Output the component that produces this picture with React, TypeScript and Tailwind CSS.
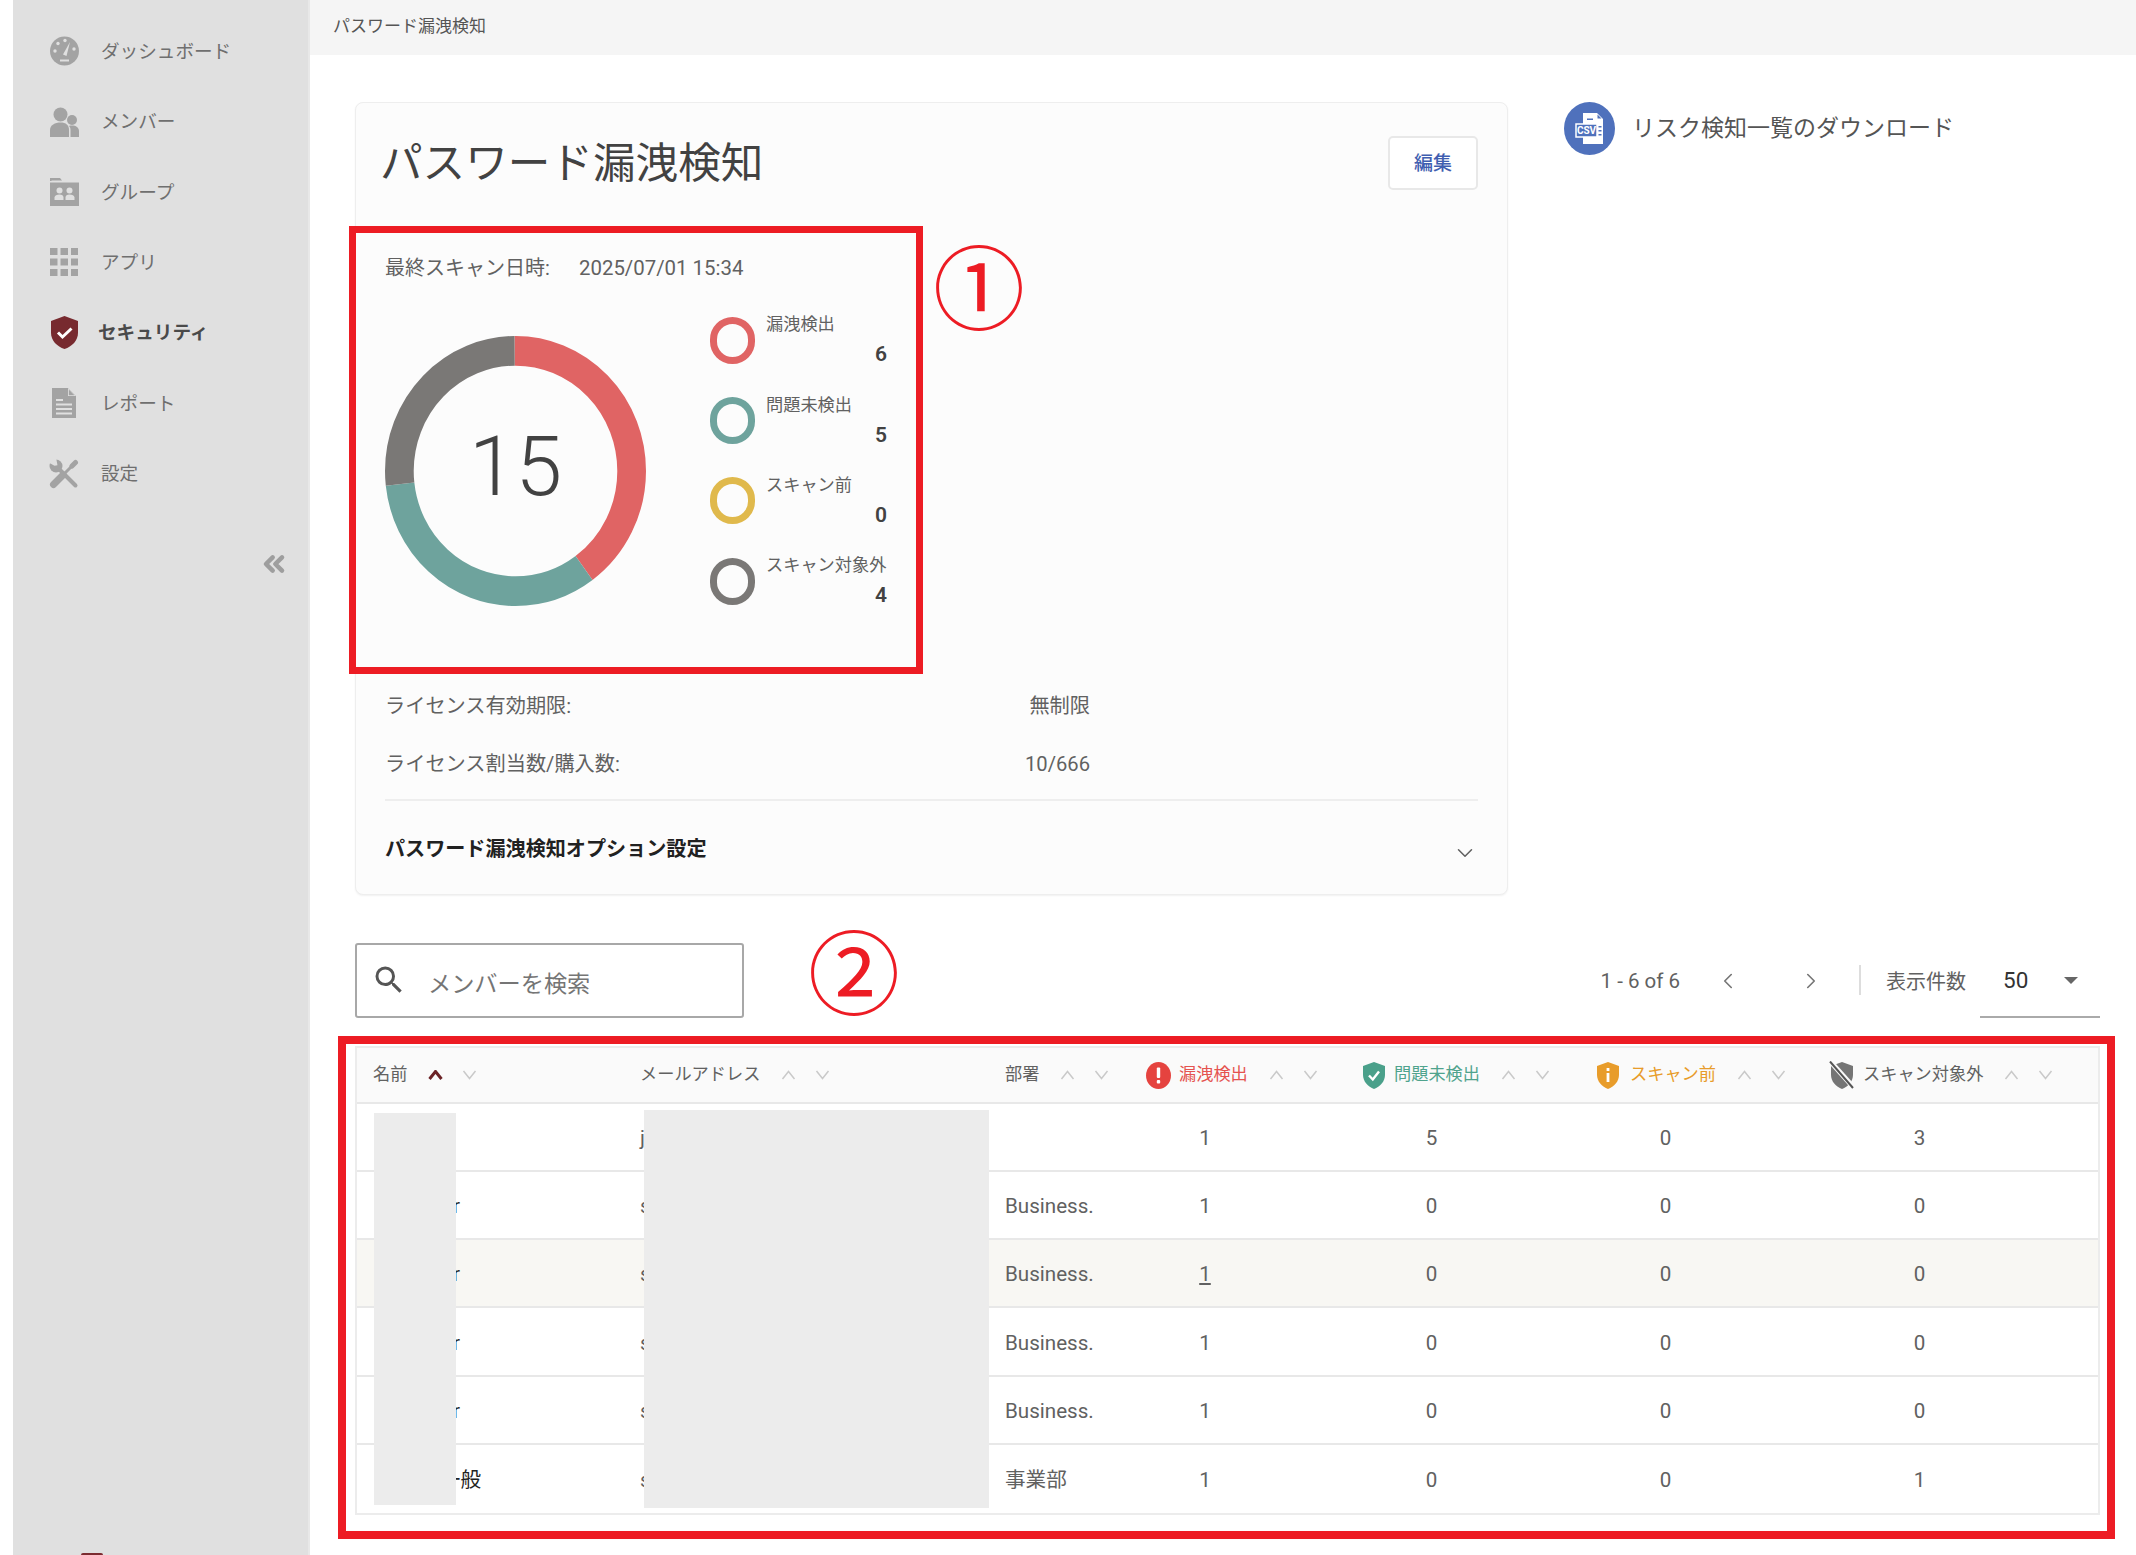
import React from "react";
import { ChevronsLeft, ChevronLeft, ChevronRight, ChevronDown } from "lucide-react";

const G = "#a3a3a3";
const BG = "#e0e0e0";

const GaugeIcon = () => (
  <svg width="29" height="30" viewBox="0 0 29 30">
    <circle cx="14.5" cy="15" r="14.5" fill={G} />
    <circle cx="5" cy="15" r="1.7" fill={BG} />
    <circle cx="8" cy="7.5" r="1.7" fill={BG} />
    <circle cx="15" cy="4.5" r="1.7" fill={BG} />
    <circle cx="24" cy="13" r="1.7" fill={BG} />
    <path d="M13 18.5L20 6L16.5 20Z" fill={BG} />
    <rect x="10" y="23.5" width="9" height="2" fill={BG} />
  </svg>
);
const MembersIcon = () => (
  <svg width="29" height="30" viewBox="0 0 29 30">
    <circle cx="10.5" cy="7.5" r="7" fill={G} />
    <circle cx="22" cy="13" r="5" fill={G} />
    <path d="M0 30V23C0 18 5 15.5 10.5 15.5C16 15.5 19 18 19 23V30Z" fill={G} />
    <path d="M20.5 30V23C20.5 21 19.8 19.5 18.8 19C20 18.6 21 18.5 22 18.5C26 18.5 29 20.5 29 24V30Z" fill={G} />
  </svg>
);
const GroupIcon = () => (
  <svg width="29" height="28" viewBox="0 0 29 28">
    <path d="M0 3V0H10L12 2.5H1.5V3Z" fill={G} />
    <rect x="0" y="4.5" width="29" height="23.5" fill={G} />
    <circle cx="9.5" cy="12.5" r="3" fill={BG} />
    <circle cx="19.5" cy="12.5" r="3" fill={BG} />
    <path d="M4.5 22V19.5C4.5 17.5 7 16.5 9.5 16.5S13.5 17.5 13.5 19.5V22Z" fill={BG} />
    <path d="M15.5 22V19.5C15.5 17.5 17 16.5 19.5 16.5S24.5 17.5 24.5 19.5V22Z" fill={BG} />
  </svg>
);
const AppsIcon = () => (
  <svg width="28" height="28" viewBox="0 0 28 28" fill={G}>
    {[0, 10.5, 21].map((x) =>
      [0, 10.5, 21].map((y) => <rect key={`${x}-${y}`} x={x} y={y} width="7.5" height="7" />)
    )}
  </svg>
);
const ShieldIcon = () => (
  <svg width="27" height="33" viewBox="0 0 27 33">
    <path d="M13.5 0L27 5V17C27 24.5 21 30.5 13.5 33C6 30.5 0 24.5 0 17V5Z" fill="#772a2f" />
    <path d="M7 16.5L11.5 21L20.5 12.5" fill="none" stroke="#fff" strokeWidth="3" />
  </svg>
);
const ReportIcon = () => (
  <svg width="24" height="30" viewBox="0 0 24 30">
    <path d="M0 0H16L24 8V30H0Z" fill={G} />
    <path d="M16 0V8H24Z" fill={BG} />
    <path d="M16.8 1.5L22.5 7.2H16.8Z" fill={G} />
    <rect x="4" y="11" width="7" height="2" fill={BG} />
    <rect x="4" y="15.5" width="16" height="2" fill={BG} />
    <rect x="4" y="20" width="16" height="2" fill={BG} />
    <rect x="4" y="24.5" width="16" height="2" fill={BG} />
  </svg>
);
const ToolsIcon = () => (
  <svg width="30" height="30" viewBox="0 0 30 30" fill="none">
    <path d="M7 7L26.5 26.5" stroke={G} strokeWidth="4" strokeLinecap="round" />
    <circle cx="7" cy="7" r="6.5" fill={G} />
    <path d="M0 0L8 0L8 7L5 7L0 3Z" fill={BG} transform="rotate(-10 4 4)" />
    <path d="M4.5 25.5L14 16" stroke={G} strokeWidth="7" strokeLinecap="round" />
    <path d="M14 16L23 7" stroke={G} strokeWidth="3" />
    <path d="M23 7L26.5 3.5" stroke={G} strokeWidth="5" strokeLinecap="round" />
  </svg>
);

const CsvIcon = () => (
  <svg width="51" height="53" viewBox="0 0 51 53">
    <ellipse cx="25.5" cy="26.5" rx="25.5" ry="26.5" fill="#4f71bc" />
    <path d="M19 11H33L39 17V42H19Z" fill="#fff" />
    <path d="M33.5 12.5L37.5 16.5H33.5Z" fill="#4f71bc" />
    <rect x="23" y="16.5" width="6" height="1.5" fill="#4f71bc" />
    <rect x="34.5" y="24" width="3" height="1.5" fill="#4f71bc" />
    <rect x="34.5" y="28" width="3" height="1.5" fill="#4f71bc" />
    <rect x="34.5" y="32" width="3" height="1.5" fill="#4f71bc" />
    <rect x="12" y="22" width="21" height="13" fill="#4f71bc" stroke="#fff" strokeWidth="1.5" />
    <text x="22.5" y="32" textAnchor="middle" fontSize="10" fontWeight="700" fill="#fff" fontFamily="Roboto, sans-serif">CSV</text>
  </svg>
);

const Alert = () => (
  <svg width="25" height="27" viewBox="0 0 25 27" className="shrink-0">
    <ellipse cx="12.5" cy="13.5" rx="12.5" ry="13.5" fill="#e5433f" />
    <rect x="10.8" y="5.5" width="3.4" height="10.5" rx="1" fill="#fff" />
    <rect x="10.8" y="18" width="3.4" height="3.4" rx="1" fill="#fff" />
  </svg>
);
const ShieldSmall = ({ c, children }: { c: string; children?: React.ReactNode }) => (
  <svg width="22" height="27" viewBox="0 0 22 27" className="shrink-0">
    <path d="M11 0L22 4V13C22 19.5 17 24.5 11 27C5 24.5 0 19.5 0 13V4Z" fill={c} />
    {children}
  </svg>
);
const SlashShield = () => (
  <svg width="26" height="28" viewBox="0 0 26 28" className="shrink-0">
    <path d="M13 1L24 5V14C24 20.5 19 25.5 13 28C7 25.5 2 20.5 2 14V5Z" fill="#757575" />
    <path d="M1 0L25 27" stroke="#fafafa" strokeWidth="5" />
    <path d="M1 0.5L24 27" stroke="#555" strokeWidth="2" />
  </svg>
);

const Chev = ({ up, active }: { up?: boolean; active?: boolean }) => (
  <svg width="15" height="10" viewBox="0 0 15 10" fill="none" className="shrink-0">
    <path
      d={up ? "M1.5 9L7.5 1.5L13.5 9" : "M1.5 1L7.5 8.5L13.5 1"}
      stroke={active ? "#6b2226" : "#c9c9c9"}
      strokeWidth={active ? 3 : 1.5}
    />
  </svg>
);
const Sort = ({ active }: { active?: boolean }) => (
  <div className="ml-[21px] flex shrink-0 items-center gap-[19px]">
    <Chev up active={active} />
    <Chev />
  </div>
);

const nav = [
  { label: "ダッシュボード", icon: <GaugeIcon /> },
  { label: "メンバー", icon: <MembersIcon /> },
  { label: "グループ", icon: <GroupIcon /> },
  { label: "アプリ", icon: <AppsIcon /> },
  { label: "セキュリティ", icon: <ShieldIcon />, active: true },
  { label: "レポート", icon: <ReportIcon /> },
  { label: "設定", icon: <ToolsIcon /> },
];

const legend = [
  { label: "漏洩検出", value: 6, ring: "border-[#e06464]" },
  { label: "問題未検出", value: 5, ring: "border-[#6ea39d]" },
  { label: "スキャン前", value: 0, ring: "border-[#e0b94c]" },
  { label: "スキャン対象外", value: 4, ring: "border-[#7a7876]" },
];

const cols = "grid grid-cols-[265px_365px_150px_136px_317px_151px_1fr]";

const rows = [
  { name: "", nameW: "w-[87px]", mail: "j", dept: "", n: [1, 5, 0, 3] },
  { name: "r", nameW: "w-[87px]", mail: "s", dept: "Business.", n: [1, 0, 0, 0] },
  { name: "r", nameW: "w-[87px]", mail: "s", dept: "Business.", n: [1, 0, 0, 0], hover: true },
  { name: "r", nameW: "w-[87px]", mail: "s", dept: "Business.", n: [1, 0, 0, 0] },
  { name: "r", nameW: "w-[87px]", mail: "s", dept: "Business.", n: [1, 0, 0, 0] },
  { name: "一般", nameW: "w-[108px]", mail: "s", dept: "事業部", n: [1, 0, 0, 1] },
];

export default function App() {
  return (
    <div className="relative flex h-[1555px] w-[2136px] overflow-hidden bg-white pl-[13px] font-[family-name:Roboto,'Noto_Sans_CJK_JP',sans-serif] text-[#616161]">
      {/* Sidebar */}
      <aside className="flex h-full w-[297px] shrink-0 flex-col border-r-2 border-[#e8e8e8] bg-[#e0e0e0] pt-[16px]">
        {nav.map((n) => (
          <div key={n.label} className="flex h-[70.4px] items-center pl-[36px]">
            <div className="flex w-[30px] shrink-0 items-center justify-center">{n.icon}</div>
            <span
              className={
                n.active
                  ? "ml-[19px] mt-[2px] text-[18.6px] font-bold text-[#4a4a4a]"
                  : "ml-[22px] mt-[3px] text-[18.6px] text-[#6f6f6f]"
              }
            >
              {n.label}
            </span>
          </div>
        ))}
        <div className="mt-[39px] flex justify-end pr-[18px]">
          <ChevronsLeft size={32} strokeWidth={3.4} color="#9e9e9e" />
        </div>
        <div className="mt-auto ml-[68px] h-[2px] w-[22px] rounded-t-full bg-[#7b2b30]" />
      </aside>

      {/* Main */}
      <main className="min-w-0 flex-1">
        <div className="flex h-[55px] items-center bg-[#f5f5f5] pb-[2px] pl-[23px] text-[17px] text-[#555]">
          パスワード漏洩検知
        </div>

        <div className="pl-[45px]">
          <div className="mt-[47px] flex items-start">
            {/* Card */}
            <section className="w-[1153px] shrink-0 rounded-[8px] border border-[#eeeeee] bg-[#fcfcfc] px-[29px] pt-[34px] pb-[31px] shadow-[0_1px_2px_rgba(0,0,0,0.06)]">
              <div className="flex h-[52px] items-center justify-between">
                <h1 className="-ml-[5px] text-[42.6px] font-normal leading-none text-[#424242]">パスワード漏洩検知</h1>
                <button className="flex h-[54px] w-[90px] items-center justify-center rounded-[5px] border-2 border-[#e8e8e8] bg-white pt-[2px] text-[19px] font-medium text-[#3f5eb0]">
                  編集
                </button>
              </div>

              <div className="mt-[65px] flex h-[28px] items-center text-[20px]">
                <span className="w-[194px]">最終スキャン日時:</span>
                <span className="text-[20.4px]">2025/07/01 15:34</span>
              </div>

              <div className="mt-[18px] flex items-start">
                <div className="relative mt-[36px] h-[270px] w-[261px] shrink-0">
                  <svg width="261" height="270" viewBox="0 0 100 100" preserveAspectRatio="none" className="block">
                    <g transform="rotate(-90 50 50)" fill="none" strokeWidth="11">
                      <circle cx="50" cy="50" r="44.5" pathLength={15} stroke="#e06464" strokeDasharray="6 9" />
                      <circle cx="50" cy="50" r="44.5" pathLength={15} stroke="#6ea39d" strokeDasharray="5 10" strokeDashoffset="-6" />
                      <circle cx="50" cy="50" r="44.5" pathLength={15} stroke="#7a7876" strokeDasharray="4 11" strokeDashoffset="-11" />
                    </g>
                  </svg>
                  <div className="absolute inset-0 flex items-center justify-center pb-[9px] text-[84px] font-light leading-none text-[#424242]">
                    15
                  </div>
                </div>
                <div className="ml-[64px] w-[177px]">
                  {legend.map((l) => (
                    <div key={l.label} className="flex h-[80.4px] items-center">
                      <span className={`h-[47px] w-[45px] shrink-0 rounded-full border-[7px] ${l.ring}`} />
                      <div className="ml-[11px] flex-1">
                        <div className="h-[24px] whitespace-nowrap text-[17.2px] leading-[24px]">{l.label}</div>
                        <div className="mt-[4px] h-[28px] text-right text-[21px] font-semibold leading-[28px] text-[#424242]">
                          {l.value}
                        </div>
                      </div>
                    </div>
                  ))}
                </div>
              </div>

              <div className="mt-[71px] flex h-[28px] w-[705px] items-center justify-between text-[20.2px]">
                <span>ライセンス有効期限:</span>
                <span>無制限</span>
              </div>
              <div className="mt-[30px] flex h-[28px] w-[705px] items-center justify-between text-[20.2px]">
                <span>ライセンス割当数/購入数:</span>
                <span>10/666</span>
              </div>
              <div className="mt-[20px] h-[2px] bg-[#eeeeee]" />
              <div className="mt-[34px] flex h-[28px] items-center justify-between">
                <span className="text-[20.1px] font-semibold text-[#212121]">パスワード漏洩検知オプション設定</span>
                <ChevronDown size={26} strokeWidth={1.4} color="#616161" className="mt-[8px]" />
              </div>
            </section>

            {/* Download */}
            <div className="ml-[56px] flex items-center">
              <CsvIcon />
              <span className="ml-[17px] mt-[1px] whitespace-nowrap text-[23px] text-[#555]">リスク検知一覧のダウンロード</span>
            </div>
          </div>

          {/* Search and pagination */}
          <div className="mt-[48px] flex h-[75px] w-[1745px] items-center">
            <div className="flex h-[75px] w-[389px] items-center rounded-[3px] border-2 border-[#a8a8a8] pl-[14px]">
              <svg width="36" height="36" viewBox="0 0 24 24" fill="#555">
                <path d="M15.5 14h-.79l-.28-.27A6.471 6.471 0 0 0 16 9.5 6.5 6.5 0 1 0 9.5 16c1.61 0 3.09-.59 4.23-1.57l.27.28v.79l5 4.99L20.49 19l-4.99-5zm-6 0C7.01 14 5 11.99 5 9.5S7.01 5 9.5 5 14 7.01 14 9.5 11.99 14 9.5 14z" />
              </svg>
              <span className="ml-[21px] mt-[9px] text-[23.2px] text-[#757575]">メンバーを検索</span>
            </div>
            <div className="ml-auto flex items-center text-[20px]">
              <span className="whitespace-nowrap pt-[3px] text-[20.5px]">1 - 6 of 6</span>
              <ChevronLeft size={26} strokeWidth={1.5} color="#757575" className="ml-[35px] mt-[1px]" />
              <ChevronRight size={26} strokeWidth={1.5} color="#757575" className="ml-[57px] mt-[1px]" />
              <div className="ml-[35px] h-[30px] w-[2px] bg-[#dddddd]" />
              <span className="ml-[25px] whitespace-nowrap pt-[3px]">表示件数</span>
              <div className="ml-[14px] flex h-[75px] w-[120px] items-center border-b-2 border-[#aaaaaa] pl-[23px] pr-[22px] pt-[3px]">
                <span className="text-[22.5px] text-[#333]">50</span>
                <span className="ml-auto h-0 w-0 border-x-[7px] border-t-[7px] border-x-transparent border-t-[#666]" />
              </div>
            </div>
          </div>

          {/* Table */}
          <div className="mt-[28px] w-[1745px] border-2 border-[#ececec]">
            <div className={`${cols} h-[56px] items-center border-b-2 border-[#e8e8e8] bg-[#fafafa] pt-[1px] text-[17.2px]`}>
              <div className="flex items-center pl-[16px]">
                名前
                <Sort active />
              </div>
              <div className="flex items-center pl-[18px]">
                メールアドレス
                <Sort />
              </div>
              <div className="flex items-center pl-[18px]">
                部署
                <Sort />
              </div>
              <div className="flex items-center pl-[9px] text-[#e5534f]">
                <Alert />
                <span className="ml-[8px] whitespace-nowrap">漏洩検出</span>
                <Sort />
              </div>
              <div className="flex items-center pl-[90px] text-[#4fa38d]">
                <ShieldSmall c="#4aa08a">
                  <path d="M6 13.5L9.8 17.5L16 9.5" fill="none" stroke="#fff" strokeWidth="2.4" />
                </ShieldSmall>
                <span className="ml-[9px] whitespace-nowrap">問題未検出</span>
                <Sort />
              </div>
              <div className="flex items-center pl-[7px] text-[#e89c2a]">
                <ShieldSmall c="#e89c2a">
                  <rect x="9.6" y="6" width="2.8" height="3" fill="#fff" />
                  <rect x="9.6" y="11" width="2.8" height="9" fill="#fff" />
                </ShieldSmall>
                <span className="ml-[11px] whitespace-nowrap">スキャン前</span>
                <Sort />
              </div>
              <div className="flex items-center pl-[88px]">
                <SlashShield />
                <span className="ml-[8px] whitespace-nowrap">スキャン対象外</span>
                <Sort />
              </div>
            </div>
            {rows.map((r, i) => (
              <div
                key={i}
                className={`${cols} h-[68.3px] items-center pt-[3px] text-[20.6px] ${i < rows.length - 1 ? "border-b-2 border-[#e8e8e8]" : ""} ${r.hover ? "bg-[#f8f7f3]" : "bg-white"}`}
              >
                <div className="pl-[16px]">
                  <div className={`${r.nameW} text-right text-[#222]`}>{r.name}</div>
                </div>
                <div className="pl-[18px]">{r.mail}</div>
                <div className="pl-[18px]">{r.dept}</div>
                {r.n.map((v, j) => (
                  <div key={j} className={`text-center ${r.hover && j === 0 ? "underline" : ""}`}>
                    {v}
                  </div>
                ))}
              </div>
            ))}
          </div>
        </div>
      </main>

      {/* Redactions and annotation marks lying over the page */}
      <div className="absolute top-[1113px] left-[374px] h-[392px] w-[82px] bg-[#ececec]" />
      <div className="absolute top-[1110px] left-[644px] h-[398px] w-[345px] bg-[#ececec]" />
      <div className="absolute top-[226px] left-[349px] h-[448px] w-[574px] border-[7.5px] border-[#ed1c24]" />
      <div className="absolute top-[1036px] left-[338px] h-[503px] w-[1777px] border-[8px] border-[#ed1c24]" />
      <div className="absolute top-[223px] left-[919px] flex h-[120px] w-[120px] items-center justify-center font-[family-name:'Noto_Sans_CJK_JP',sans-serif] text-[92px] leading-none text-[#ed1c24]">
        ①
      </div>
      <div className="absolute top-[908px] left-[794px] flex h-[120px] w-[120px] items-center justify-center font-[family-name:'Noto_Sans_CJK_JP',sans-serif] text-[92px] leading-none text-[#ed1c24]">
        ②
      </div>
    </div>
  );
}
